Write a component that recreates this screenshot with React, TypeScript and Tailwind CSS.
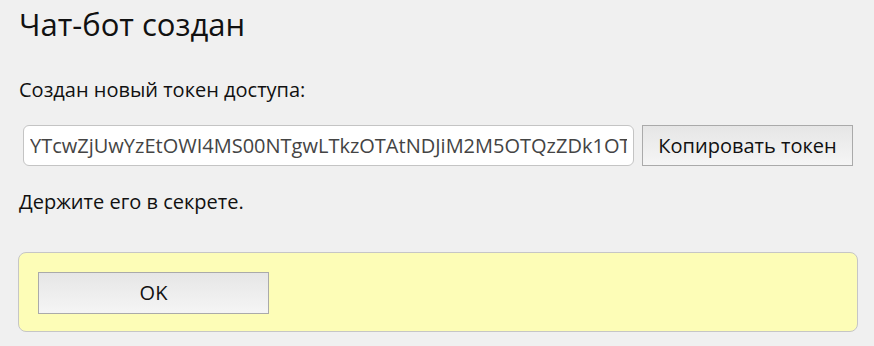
import React from "react";

export default function App() {
  return (
    <div
      className="w-[874px] h-[346px] bg-[#f0f0f0] text-[#111] overflow-hidden"
      style={{ fontFamily: '"Open Sans", "Noto Sans", sans-serif' }}
    >
      <div className="pl-[19px] pr-[17px]">
        <h1 className="text-[31px] leading-[36px] pt-[6px] font-normal">Чат-бот создан</h1>
        <p className="mt-[36px] text-[20px] leading-[24px]">Создан новый токен доступа:</p>
        <div className="mt-[23px] flex items-center pl-[4px]">
          <input
            readOnly
            value="YTcwZjUwYzEtOWI4MS00NTgwLTkzOTAtNDJiM2M5OTQzZDk1OTA0"
            className="w-[611px] h-[41px] rounded-[6px] border border-[#c4c4c4] bg-white px-[6px] text-[20px] text-[#444] outline-none"
            style={{ fontFamily: '"Open Sans", "Noto Sans", sans-serif' }}
          />
          <button className="ml-[8px] w-[211px] h-[41px] border border-[#aaa] bg-gradient-to-b from-[#e6e6e6] to-[#f5f5f5] text-[20px] text-[#111]">
            Копировать токен
          </button>
        </div>
        <p className="mt-[24px] text-[20px] leading-[24px]">Держите его в секрете.</p>
        <div className="mt-[38px] -ml-[1px] w-[840px] h-[80px] rounded-[8px] border border-[#c6c6c6] bg-[#fdfdb7] pt-[19px] pl-[19px]">
          <button className="w-[231px] h-[42px] border border-[#aaa] bg-gradient-to-b from-[#e6e6e6] to-[#f5f5f5] text-[20px] text-[#111]">
            OK
          </button>
        </div>
      </div>
    </div>
  );
}
